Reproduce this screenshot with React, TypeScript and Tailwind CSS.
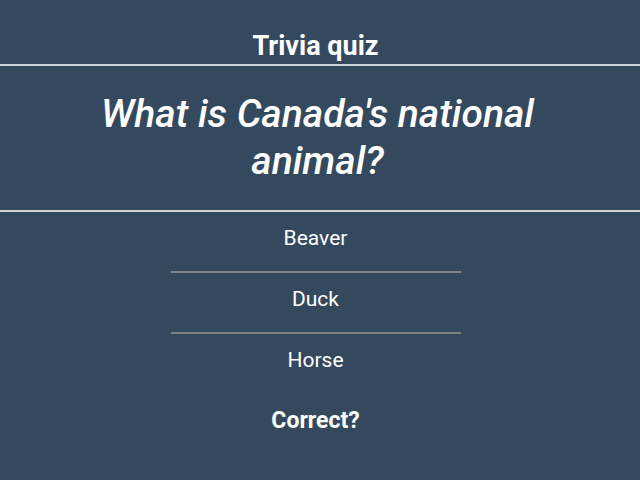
export default function App() {
  return (
    <div className="min-h-[480px] w-full bg-[#34495e] text-white" style={{ fontFamily: "Roboto, sans-serif" }}>
      <div className="flex flex-col">
        <h1 className="pt-[30px] pb-[2px] pr-[9px] text-center text-[27px] font-bold leading-[32px]">Trivia quiz</h1>
        <div className="h-[2px] bg-[#d0d4d8]" />
        <h2 className="pt-[25px] pb-[25px] pl-[92px] pr-[97px] text-center text-[39px] font-medium italic leading-[47px]">
          What is Canada's national animal?
        </h2>
        <div className="h-[2px] bg-[#d0d4d8]" />
        <div className="flex flex-col items-center pr-[9px]">
          <div className="w-[290px] pt-[11px] pb-[17px] text-center text-[21px] leading-[31px] border-b-2 border-[#7d8287]">Beaver</div>
          <div className="w-[290px] pt-[11px] pb-[17px] text-center text-[21px] leading-[31px] border-b-2 border-[#7d8287]">Duck</div>
          <div className="w-[290px] pt-[11px] pb-[17px] text-center text-[21px] leading-[31px]">Horse</div>
          <div className="pt-[13px] text-center text-[23px] font-bold leading-[30px]">Correct?</div>
        </div>
      </div>
    </div>
  );
}
